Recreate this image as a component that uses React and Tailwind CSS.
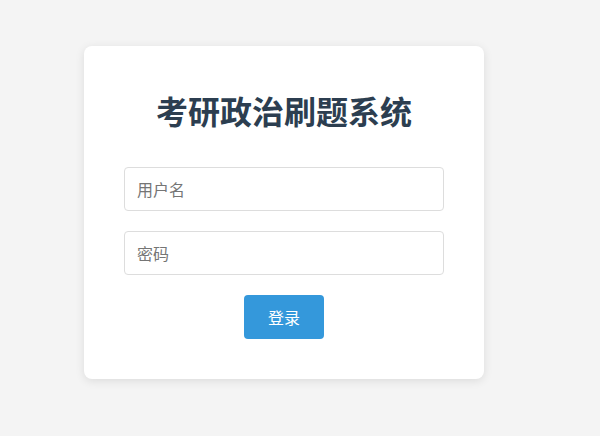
export default function App() {
  return (
    <div
      className="min-h-[436px] w-full bg-[#f4f4f4] pt-[46px] pl-[84px]"
      style={{ fontFamily: '"Microsoft YaHei", "Noto Sans CJK SC", "Liberation Sans", sans-serif' }}
    >
      <div className="w-[400px] rounded-[8px] bg-white p-[40px] shadow-[0_2px_10px_rgba(0,0,0,0.1)]">
        <h1 className="mt-[5px] mb-[38px] h-[38px] text-center text-[32px] font-bold leading-[38px] text-[#2c3e50]">
          考研政治刷题系统
        </h1>
        <div className="flex flex-col gap-[20px]">
          <input
            className="h-[44px] w-full rounded-[4px] border border-[#dddddd] px-[12px] text-[16px] text-[#333] outline-none placeholder:text-[#757575]"
            placeholder="用户名"
          />
          <input
            type="password"
            className="h-[44px] w-full rounded-[4px] border border-[#dddddd] px-[12px] text-[16px] text-[#333] outline-none placeholder:text-[#757575]"
            placeholder="密码"
          />
          <div className="flex justify-center">
            <button className="h-[44px] w-[80px] rounded-[4px] bg-[#3498db] text-[16px] text-white">
              登录
            </button>
          </div>
        </div>
      </div>
    </div>
  );
}
